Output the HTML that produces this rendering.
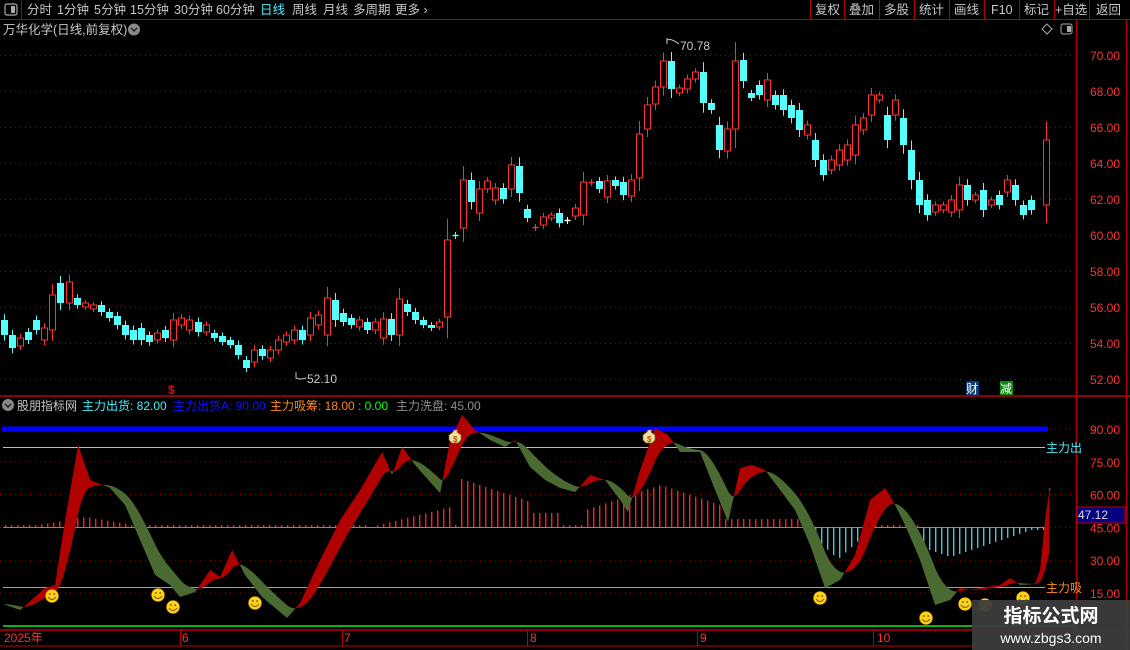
<!DOCTYPE html>
<html><head><meta charset="utf-8">
<style>
html,body{margin:0;padding:0;background:#000;width:1130px;height:650px;overflow:hidden}
svg{display:block;font-family:"Liberation Sans","Noto Sans CJK SC",sans-serif}
</style></head><body>
<svg id="s" width="1130" height="650" viewBox="0 0 1130 650" xmlns="http://www.w3.org/2000/svg">
<rect width="1130" height="650" fill="#000"/>
<line x1="0" y1="19.5" x2="1130" y2="19.5" stroke="#b00000"/>
<line x1="21.5" y1="0" x2="21.5" y2="19" stroke="#b00000"/>
<rect x="5" y="4" width="12" height="11" rx="2" fill="none" stroke="#aaa" stroke-width="1.2"/>
<rect x="11" y="6" width="4" height="7" fill="#aaa"/>
<g fill="#c8c8c8" font-size="12.5">
<text x="27" y="14">分时</text><text x="57" y="14">1分钟</text><text x="94" y="14">5分钟</text>
<text x="130" y="14">15分钟</text><text x="174" y="14">30分钟</text><text x="216" y="14">60分钟</text>
<text x="260" y="14" fill="#4ef0ff">日线</text><text x="292" y="14">周线</text><text x="323" y="14">月线</text>
<text x="353" y="14">多周期</text><text x="395" y="14">更多 ›</text>
</g>
<g stroke="#b00000"><line x1="810.5" y1="0" x2="810.5" y2="19"/><line x1="844.5" y1="0" x2="844.5" y2="19"/><line x1="879.5" y1="0" x2="879.5" y2="19"/><line x1="914.5" y1="0" x2="914.5" y2="19"/><line x1="949.5" y1="0" x2="949.5" y2="19"/><line x1="984.5" y1="0" x2="984.5" y2="19"/><line x1="1019.5" y1="0" x2="1019.5" y2="19"/><line x1="1054.5" y1="0" x2="1054.5" y2="19"/><line x1="1089.5" y1="0" x2="1089.5" y2="19"/></g>
<g fill="#c8c8c8" font-size="12.5">
<text x="815" y="14">复权</text><text x="849" y="14">叠加</text><text x="884" y="14">多股</text><text x="919" y="14">统计</text><text x="954" y="14">画线</text><text x="991" y="14">F10</text><text x="1024" y="14">标记</text><text x="1055" y="14">+自选</text><text x="1096" y="14">返回</text>
</g>
<text x="3" y="34" fill="#c8c8c8" font-size="12.5">万华化学(日线,前复权)</text>
<circle cx="134" cy="29.5" r="6" fill="#888"/><path d="M131 28l3 3 3-3" stroke="#222" stroke-width="1.5" fill="none"/>
<path d="M1047 24l5 5-5 5-5-5z" fill="none" stroke="#aaa"/>
<rect x="1061" y="24" width="11" height="10" rx="2" fill="none" stroke="#aaa"/><rect x="1067" y="26" width="4" height="6" fill="#aaa"/>
<line x1="1076.5" y1="20" x2="1076.5" y2="650" stroke="#b00000" stroke-width="1.5"/>
<line x1="1126.5" y1="20" x2="1126.5" y2="650" stroke="#b00000" stroke-width="1.5"/>
<line x1="0" y1="396" x2="1130" y2="396" stroke="#c00000" stroke-width="1.5"/>
<line x1="0" y1="630" x2="1130" y2="630" stroke="#c00000" stroke-width="1.5"/>
<line x1="0" y1="646" x2="1130" y2="646" stroke="#c00000" stroke-width="1"/>
<g id="grid"></g>
<g id="cand"></g>
<text x="680" y="50" fill="#c8c8c8" font-size="12">70.78</text>
<path d="M667 38v6M667 40q4-2 12 4" stroke="#c8c8c8" fill="none"/>
<text x="307" y="383" fill="#c8c8c8" font-size="12">52.10</text>
<path d="M296 372v6M296 378q4 2 10 0" stroke="#c8c8c8" fill="none"/>
<text x="168" y="394" fill="#f00" font-size="12" font-weight="bold">$</text>
<rect x="966" y="381" width="13" height="14" fill="#0b3d7a"/><text x="966" y="393" fill="#fff" font-size="12">财</text>
<rect x="1000" y="381" width="13" height="14" fill="#118811"/><text x="1000" y="393" fill="#fff" font-size="12">减</text>
<circle cx="8" cy="405" r="6" fill="#888"/><path d="M5 404l3 3 3-3" stroke="#222" stroke-width="1.5" fill="none"/>
<g font-size="12"><text x="17" y="410" fill="#c8c8c8">股朋指标网</text>
<text x="82" y="410" fill="#40f0ff">主力出货: 82.00</text>
<text x="173" y="410" fill="#1010ff">主力出货A: 90.00</text>
<text x="270" y="410" fill="#ff8c1a">主力吸筹: 18.00</text>
<text x="358" y="410" fill="#10ff10">: 0.00</text>
<text x="396" y="410" fill="#909090">主力洗盘: 45.00</text></g>
<g id="ind"></g>
<g fill="#ff3030" font-size="12"><text x="4" y="642">2025年</text><text x="182" y="642">6</text><text x="344" y="642">7</text><text x="530" y="642">8</text><text x="700" y="642">9</text><text x="877" y="642">10</text></g>
<g stroke="#c00000"><line x1="180.5" y1="630" x2="180.5" y2="646"/><line x1="342.5" y1="630" x2="342.5" y2="646"/><line x1="527.5" y1="630" x2="527.5" y2="646"/><line x1="697.5" y1="630" x2="697.5" y2="646"/><line x1="873.5" y1="630" x2="873.5" y2="646"/></g>
<rect x="972" y="600" width="158" height="50" fill="#3c3c3c" opacity="0.95"/>
<text x="1051" y="622" fill="#fff" font-size="19" font-weight="bold" text-anchor="middle">指标公式网</text>
<text x="1051" y="643" fill="#fff" font-size="14" text-anchor="middle">www.zbgs3.com</text>
</svg>
<script>
var NS="http://www.w3.org/2000/svg";
function el(p,t,a,txt){var e=document.createElementNS(NS,t);for(var k in a)e.setAttribute(k,a[k]);if(txt!=null)e.textContent=txt;document.getElementById(p).appendChild(e);return e;}
for(var i=0;i<10;i++){var p=70-2*i,y=55+(70-p)*18;el('grid','line',{x1:0,y1:y+.5,x2:1076,y2:y+.5,stroke:'#a00000','stroke-dasharray':'1 4'});el('grid','text',{x:1090,y:y+5,fill:'#ff3030','font-size':12},p.toFixed(2));}
var L=[[320,335,'c'],[335,348,'c'],[338,346,'r'],[332,340,'c'],[320,330,'c'],[328,340,'r'],[295,330,'r'],[283,303,'c'],[282,303,'r'],[298,305,'c'],[303,307,'r'],[305,309,'r'],[305,312,'c'],[312,318,'c'],[316,325,'c'],[325,335,'c'],[330,340,'c'],[328,340,'c'],[335,342,'c'],[333,340,'r'],[330,338,'c'],[320,340,'r'],[318,325,'r'],[320,330,'r'],[322,332,'c'],[325,332,'r'],[333,338,'c'],[336,342,'c'],[340,345,'c'],[345,355,'c'],[360,368,'c'],[350,362,'r'],[349,356,'c'],[350,358,'r'],[340,350,'r'],[335,342,'r'],[330,340,'r'],[330,340,'c'],[318,335,'r'],[315,325,'r'],[298,335,'r'],[300,320,'c'],[313,322,'c'],[318,325,'c'],[320,327,'r'],[322,330,'c'],[322,330,'r']];
var R=[[319,338,'r'],[319,335,'c'],[299,335,'r'],[304,312,'c'],[312,320,'c'],[320,325,'c'],[325,328,'c'],[322,327,'r'],[240,317,'r'],[235,236,'c'],[180,228,'r'],[180,202,'c'],[189,213,'r'],[181,189,'r'],[188,200,'r'],[188,199,'c'],[165,189,'r'],[166,193,'c'],[209,218,'c'],[227,228,'r'],[217,225,'r'],[215,218,'r'],[213,223,'c'],[220,221,'w'],[208,216,'r'],[182,215,'r'],[182,183,'r'],[181,189,'c'],[181,197,'r'],[180,186,'c'],[182,195,'c'],[180,196,'r'],[134,178,'r'],[105,129,'r'],[87,104,'r'],[61,87,'r'],[61,89,'c'],[88,93,'r'],[79,89,'r'],[72,79,'r'],[72,103,'c'],[103,110,'c'],[125,150,'c'],[129,151,'r'],[61,129,'r'],[60,81,'c'],[93,98,'c'],[85,95,'c'],[80,100,'r'],[95,105,'c'],[95,110,'c'],[105,118,'c'],[110,130,'c'],[125,135,'r'],[140,160,'c'],[160,175,'c'],[160,170,'r'],[150,165,'r'],[145,160,'r'],[125,155,'r'],[118,130,'r'],[95,115,'r'],[95,100,'r'],[115,140,'c'],[100,115,'r'],[118,145,'c'],[150,180,'c'],[180,205,'c'],[200,215,'c'],[205,212,'r'],[205,210,'r'],[200,212,'r'],[185,210,'r'],[185,200,'c'],[195,200,'r'],[190,210,'c'],[200,205,'r'],[195,205,'c'],[180,192,'r'],[185,200,'c'],[205,215,'c'],[200,210,'c'],[140,205,'r']];
function cand(x,t,b,c){var col=c=='r'?'#ff3232':c=='w'?'#fff':'#54ffff';var h=Math.max(3,(b-t)*.25+2);el('cand','line',{x1:x,y1:t-h,x2:x,y2:b+h,stroke:col});if(b-t<2){el('cand','line',{x1:x-3,y1:t+.5,x2:x+3,y2:t+.5,stroke:col,'stroke-width':1.5});return;}
if(c=='r')el('cand','rect',{x:x-3,y:t,width:6,height:b-t,fill:'#000',stroke:col});else el('cand','rect',{x:x-3.5,y:t,width:7,height:b-t,fill:col});}
var xl=4,st=(383-4)/L.length;for(var i=0;i<L.length;i++)cand(Math.round(xl+i*st)+.5,L[i][0],L[i][1],L[i][2]);
for(var i=0;i<R.length;i++){var x=383+i*8;if(i==R.length-1)x=1046;cand(x+.5,R[i][0],R[i][1],R[i][2]);}
function vy(v){return 429+(90-v)*2.187;}
[90,75,60,45,30,15].forEach(function(v){var y=vy(v);el('ind','line',{x1:0,y1:y,x2:1076,y2:y,stroke:'#a00000','stroke-dasharray':'1 4'});el('ind','text',{x:1090,y:y+5,fill:'#ff3030','font-size':12},v.toFixed(2));});
el('ind','line',{x1:2,y1:429,x2:1048,y2:429,stroke:'#0000ff','stroke-width':5});
el('ind','line',{x1:3,y1:447.5,x2:1045,y2:447.5,stroke:'#40f0ff'});
el('ind','text',{x:1046,y:452,fill:'#40f0ff','font-size':12},'主力出');
el('ind','line',{x1:3,y1:587.5,x2:1045,y2:587.5,stroke:'#ff8c1a'});
el('ind','text',{x:1046,y:592,fill:'#ff8c1a','font-size':12},'主力吸');
el('ind','line',{x1:3,y1:626,x2:1076,y2:626,stroke:'#10ee10','stroke-width':1.5});
el('ind','line',{x1:3,y1:527.5,x2:1045,y2:527.5,stroke:'#888'});
for(var x=5;x<1045;x+=6){var h=0,c='#ff2020';
if(x>40&&x<130)h=-(10-Math.abs(x-85)/6);else if(x>370&&x<455)h=-(x-370)/4;else if(x>455&&x<530)h=-(50-(x-455)/3);else if(x>530&&x<560)h=-14;else if(x>585&&x<720)h=-(12+Math.max(0,30-Math.abs(x-660)/3));else if(x>720&&x<800)h=-8;else if(x>805&&x<870){h=Math.min(x-805,870-x)*.9+3;c='#30d0e0';}else if(x>920&&x<1045){h=Math.max(3,30-Math.abs(x-950)/3);c='#30d0e0';}else h=-2;
if(Math.abs(h)<1)continue;el('ind','rect',{x:x,y:Math.min(527,527+h),width:1.4,height:Math.abs(h),fill:c});}
el('ind','rect',{x:1077,y:507,width:48,height:16,fill:'#000080',stroke:'#c00000'});
el('ind','text',{x:1078,y:519,fill:'#ddd','font-size':12},'47.12');
el('ind','text',{x:1047,y:494,fill:'#ff3030','font-size':11},'↑');
var P=[[3,604],[20,610],[45,588],[55,585],[65,520],[78,445],[90,480],[110,488],[125,505],[140,540],[155,575],[170,585],[180,597],[195,592],[210,570],[220,577],[232,550],[245,575],[262,597],[287,618],[300,603],[320,560],[340,520],[360,490],[382,452],[392,475],[402,447],[415,465],[430,482],[440,493],[450,440],[462,415],[475,430],[490,440],[505,447],[515,440],[530,467],[545,480],[560,488],[575,492],[590,475],[605,480],[620,500],[628,512],[640,470],[655,428],[668,435],[680,452],[700,452],[715,490],[728,522],[740,468],[752,465],[765,470],[780,490],[795,510],[810,545],[825,588],[840,580],[855,555],[870,500],[885,488],[895,505],[905,525],[920,560],[935,605],[950,600],[960,588],[970,590],[980,588],[1000,585],[1010,578],[1020,585],[1035,584],[1040,570],[1045,520],[1050,485]];
var A=[];for(var i=0;i<P.length-1;i++){for(var x=P[i][0];x<P[i+1][0];x++){A.push([x,P[i][1]+(P[i+1][1]-P[i][1])*(x-P[i][0])/(P[i+1][0]-P[i][0])]);}}
var B=[],e=A[0][1];for(var i=0;i<A.length;i++){e=e+(A[i][1]-e)*0.065;B.push(e);}
for(var i=0;i<A.length-1;i++){var col=A[i][1]<B[i]?'#b00000':'#4a6a32';el('ind','path',{d:'M'+A[i][0]+' '+A[i][1]+'L'+(A[i][0]+1.2)+' '+A[i+1][1]+'L'+(A[i][0]+1.2)+' '+B[i+1]+'L'+A[i][0]+' '+B[i]+'Z',fill:col});}
[[52,596],[158,595],[173,607],[255,603],[820,598],[926,618],[965,604],[985,605],[1023,598]].forEach(function(p){var g='M'+(p[0]-4)+' '+(p[1]+1)+'q4 5 8 0';el('ind','circle',{cx:p[0],cy:p[1],r:6.5,fill:'#ffd21a',stroke:'#c89000','stroke-width':.6});el('ind','path',{d:g,stroke:'#6a4a00',fill:'none','stroke-width':1});el('ind','circle',{cx:p[0]-2.2,cy:p[1]-2,r:.9,fill:'#6a4a00'});el('ind','circle',{cx:p[0]+2.2,cy:p[1]-2,r:.9,fill:'#6a4a00'});});
[[456,437],[650,437]].forEach(function(p){el('ind','path',{d:'M'+(p[0]-2)+' '+(p[1]-7)+'l4 0 -1 2 4 3 0 5 -3 3 -6 0 -3-3 0-5 4-3z',fill:'#f2dfa0',stroke:'#8a6a20','stroke-width':.7});el('ind','text',{x:p[0]-3,y:p[1]+5,fill:'#b05000','font-size':8,'font-weight':'bold'},'$');});
</script>
</body></html>
